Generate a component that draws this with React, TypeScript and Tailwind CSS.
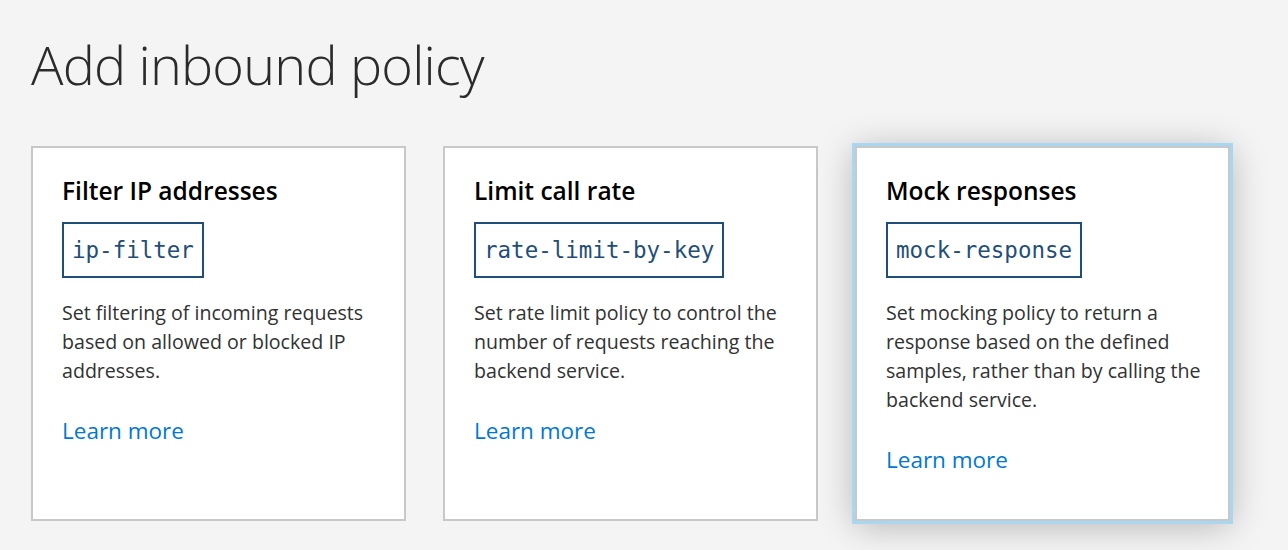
const policies = [
  {
    title: 'Filter IP addresses',
    code: 'ip-filter',
    desc: 'Set filtering of incoming requests based on allowed or blocked IP addresses.',
  },
  {
    title: 'Limit call rate',
    code: 'rate-limit-by-key',
    desc: 'Set rate limit policy to control the number of requests reaching the backend service.',
  },
  {
    title: 'Mock responses',
    code: 'mock-response',
    desc: 'Set mocking policy to return a response based on the defined samples, rather than by calling the backend service.',
    active: true,
  },
];

export default function App() {
  return (
    <div
      className="h-[550px] w-[1288px] overflow-hidden bg-[#f4f4f4] pl-[31px]"
      style={{ fontFamily: '"Open Sans", "Noto Sans", sans-serif' }}
    >
      <h1 className="pt-[29px] text-[54px] font-light leading-[70px] tracking-[-0.8px] text-[#2b2b2b]">
        Add inbound policy
      </h1>

      <div className="mt-[47px] flex gap-[37px]">
        {policies.map((p) => (
          <div
            key={p.code}
            className={`h-[375px] w-[375px] border-2 border-[#c8c8c8] bg-white pl-[29px] pr-[20px] pt-[27px] ${
              p.active ? 'shadow-[0_0_0_3px_#a9d6f0,0_4px_34px_rgba(0,0,0,0.28)]' : ''
            }`}
          >
            <h2 className="text-[24.5px] font-semibold leading-[32px] text-black">{p.title}</h2>
            <div className="mt-[15px] inline-block border-2 border-[#1f4e79] px-[8px] py-[11px]">
              <code
                className="block text-[22.5px] leading-[30px] text-[#1f4e79]"
                style={{ fontFamily: '"DejaVu Sans Mono", "Liberation Mono", monospace' }}
              >
                {p.code}
              </code>
            </div>
            <p className="mt-[20px] text-[19.6px] leading-[29px] text-[#323232]">{p.desc}</p>
            <a href="#" className="mt-[31px] block text-[22.5px] leading-[30px] text-[#0078d4]">
              Learn more
            </a>
          </div>
        ))}
      </div>
    </div>
  );
}
